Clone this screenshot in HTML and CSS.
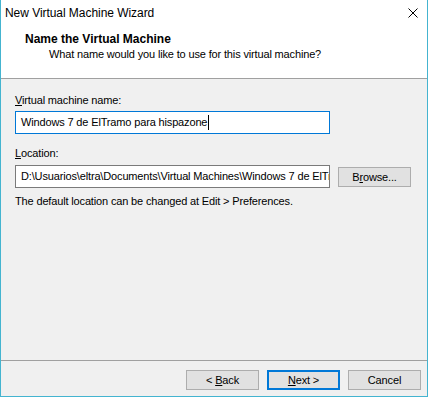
FILE: index.html
```html
<!DOCTYPE html>
<html lang="en">
<head>
  <meta charset="UTF-8">
  <title>New Virtual Machine Wizard</title>
  <link rel="stylesheet" href="styles.css">
</head>
<body>
  <div class="window">
    <div class="titlebar">
      <span class="title">New Virtual Machine Wizard</span>
      <svg class="close" width="10" height="10" viewBox="0 0 10 10">
        <path d="M0.5 0.5 L9.5 9.5 M9.5 0.5 L0.5 9.5" stroke="#000" stroke-width="1" fill="none"/>
      </svg>
    </div>

    <div class="header">
      <div class="header-title">Name the Virtual Machine</div>
      <div class="header-sub">What name would you like to use for this virtual machine?</div>
    </div>

    <div class="content">
      <div class="label"><u>V</u>irtual machine name:</div>
      <div class="input focused">Windows 7 de ElTramo para hispazone<span class="caret"></span></div>

      <div class="label label-location"><u>L</u>ocation:</div>
      <div class="row">
        <div class="input path">D:\Usuarios\eltra\Documents\Virtual Machines\Windows 7 de ElTramo para hispazone</div>
        <div class="button browse">B<u>r</u>owse...</div>
      </div>
      <div class="hint">The default location can be changed at Edit &gt; Preferences.</div>
    </div>

    <div class="footer">
      <div class="button">&lt; <u>B</u>ack</div>
      <div class="button default"><u>N</u>ext &gt;</div>
      <div class="button">Cancel</div>
    </div>
  </div>
</body>
</html>
```

FILE: styles.css
```css
* {
  margin: 0;
  padding: 0;
  box-sizing: border-box;
}

body {
  width: 428px;
  height: 397px;
  overflow: hidden;
  font-family: 'Tahoma', 'Liberation Sans', sans-serif;
  font-size: 11px;
  letter-spacing: -0.15px;
  line-height: 15px;
  color: #000;
  background: #fff;
}

.window {
  height: 397px;
  display: flex;
  flex-direction: column;
  background: #f0f0f0;
  border: 1px solid #44b4d0;
  border-top: none;
}

.titlebar {
  height: 30px;
  background: #fff;
  display: flex;
  justify-content: space-between;
  align-items: flex-start;
  padding: 6px 0 0 4px;
}

.title {
  font-size: 12px;
  letter-spacing: -0.05px;
}

.close {
  margin: 2px 9px 0 0;
}

.header {
  height: 49px;
  background: #fff;
  border-bottom: 1px solid #a0a0a0;
  padding: 2px 0 0 24px;
}

.header-title {
  font-weight: bold;
  font-size: 12px;
  letter-spacing: 0;
}

.header-sub {
  padding-left: 24px;
}

.content {
  flex: 1;
  padding: 14px 0 0 14px;
}

.label-location {
  margin-top: 12px;
}

.input {
  width: 315px;
  height: 23px;
  margin-top: 3px;
  background: #fff;
  border: 1px solid #7a7a7a;
  padding: 3px 0 0 5px;
  white-space: nowrap;
  overflow: hidden;
}

.input.focused {
  border-color: #0078d7;
}

.caret {
  display: inline-block;
  width: 1px;
  height: 15px;
  margin-left: 1px;
  background: #000;
  vertical-align: top;
}

.row {
  display: flex;
  align-items: center;
  gap: 8px;
  margin-top: 4px;
}

.row .input {
  margin-top: 0;
}

.hint {
  margin-top: 6px;
}

.footer {
  height: 36px;
  border-top: 1px solid #a0a0a0;
  display: flex;
  justify-content: flex-end;
  align-items: flex-start;
  gap: 8px;
  padding: 9px 6px 0 0;
}

.button {
  width: 73px;
  height: 20px;
  background: #e1e1e1;
  border: 1px solid #adadad;
  text-align: center;
  line-height: 18px;
}

.button.default {
  border: 2px solid #0078d7;
  line-height: 16px;
}
```
